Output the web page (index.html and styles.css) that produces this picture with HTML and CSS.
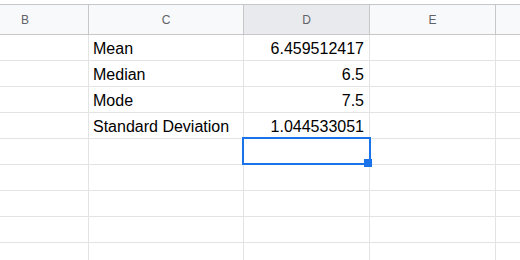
FILE: index.html
```html
<!DOCTYPE html>
<html>
<head>
<meta charset="utf-8">
<link rel="stylesheet" href="styles.css">
</head>
<body>
<div class="viewport">
  <div class="sheet">
    <div class="hdr">B</div>
    <div class="hdr">C</div>
    <div class="hdr hdr-sel">D</div>
    <div class="hdr">E</div>
    <div class="hdr"></div>

    <div class="cell"></div><div class="cell">Mean</div><div class="cell num">6.459512417</div><div class="cell"></div><div class="cell"></div>
    <div class="cell"></div><div class="cell">Median</div><div class="cell num">6.5</div><div class="cell"></div><div class="cell"></div>
    <div class="cell"></div><div class="cell">Mode</div><div class="cell num">7.5</div><div class="cell"></div><div class="cell"></div>
    <div class="cell"></div><div class="cell">Standard Deviation</div><div class="cell num">1.044533051</div><div class="cell"></div><div class="cell"></div>
    <div class="cell"></div><div class="cell"></div><div class="cell sel"><div class="sel-box"><span class="handle"></span></div></div><div class="cell"></div><div class="cell"></div>
    <div class="cell"></div><div class="cell"></div><div class="cell"></div><div class="cell"></div><div class="cell"></div>
    <div class="cell"></div><div class="cell"></div><div class="cell"></div><div class="cell"></div><div class="cell"></div>
    <div class="cell"></div><div class="cell"></div><div class="cell"></div><div class="cell"></div><div class="cell"></div>
    <div class="cell"></div><div class="cell"></div><div class="cell"></div><div class="cell"></div><div class="cell"></div>
  </div>
</div>
</body>
</html>
```
FILE: styles.css
```css
html, body {
  margin: 0;
  padding: 0;
  background: #ffffff;
  overflow: hidden;
}
.viewport {
  width: 520px;
  height: 260px;
  overflow: hidden;
  padding-top: 4px;
  box-sizing: border-box;
}
.sheet {
  margin-left: -38px;
  display: grid;
  grid-template-columns: 127px 155px 126px 126px 200px;
  grid-template-rows: 31px repeat(9, 26px);
  font-family: "Liberation Sans", Arial, sans-serif;
}
.hdr {
  box-sizing: border-box;
  background: #f8f9fa;
  border-top: 1px solid #c7c7c7;
  border-bottom: 1px solid #c7c7c7;
  border-right: 1px solid #c7c7c7;
  display: flex;
  align-items: center;
  justify-content: center;
  font-size: 12px;
  color: #5f6368;
  padding-top: 1px;
}
.hdr-sel {
  background: #e8eaed;
}
.cell {
  box-sizing: border-box;
  border-right: 1px solid #e2e3e3;
  border-bottom: 1px solid #e2e3e3;
  display: flex;
  align-items: center;
  padding: 2px 4px 0 4px;
  font-size: 16px;
  color: #000000;
  white-space: nowrap;
}
.num {
  justify-content: flex-end;
  padding-right: 5px;
}
.sel {
  position: relative;
}
.sel-box {
  position: absolute;
  left: -2px;
  top: -2px;
  width: 129px;
  height: 28px;
  box-sizing: border-box;
  border: 2px solid #1a73e8;
}
.handle {
  position: absolute;
  right: -3px;
  bottom: -4px;
  width: 8px;
  height: 8px;
  background: #1a73e8;
}
```
